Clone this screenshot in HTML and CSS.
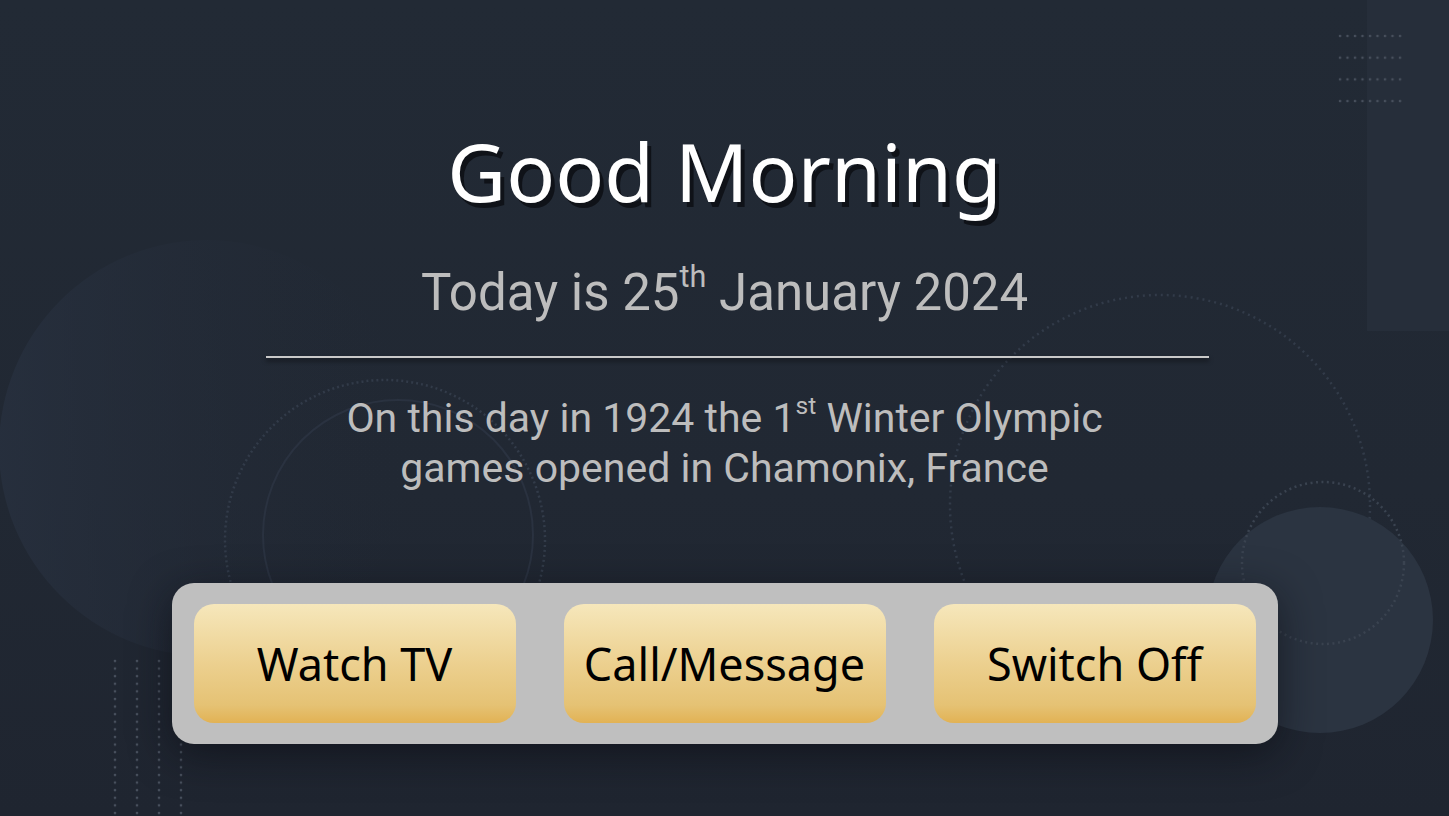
FILE: index.html
```html
<!DOCTYPE html>
<html lang="en">
<head>
<meta charset="utf-8">
<title>Good Morning</title>
<link rel="stylesheet" href="styles.css">
</head>
<body>
<div class="screen">
  <svg class="decor" width="1449" height="816" viewBox="0 0 1449 816" aria-hidden="true">
    <defs>
      <linearGradient id="bigc" x1="0" y1="0" x2="1" y2="0">
        <stop offset="0" stop-color="#283140" stop-opacity="0.75"/>
        <stop offset="1" stop-color="#222935" stop-opacity="0"/>
      </linearGradient>
      <pattern id="dotrow" x="1338" y="34" width="7.5" height="21.7" patternUnits="userSpaceOnUse">
        <circle cx="2" cy="2" r="1.3" fill="#48505d"/>
      </pattern>
      <pattern id="dotcol" x="113" y="659" width="22" height="7.6" patternUnits="userSpaceOnUse">
        <circle cx="2" cy="2" r="1.3" fill="#48505d"/>
      </pattern>
    </defs>
    <circle cx="207" cy="448" r="208" fill="url(#bigc)"/>
    <circle cx="398" cy="535" r="135" fill="none" stroke="#2a3240" stroke-width="2"/>
    <circle cx="385" cy="540" r="160" fill="none" stroke="#323b49" stroke-width="2.5" stroke-dasharray="2 3"/>
    <rect x="1367" y="0" width="82" height="331" fill="#262e3a"/>
    <circle cx="1160" cy="505" r="210" fill="none" stroke="#323b49" stroke-width="2.5" stroke-dasharray="2 4"/>
    <circle cx="1320" cy="620" r="113" fill="#2b3441"/>
    <circle cx="1323" cy="563" r="81" fill="none" stroke="#3a4350" stroke-width="2.5" stroke-dasharray="2 3.5"/>
    <rect x="1337" y="33" width="68" height="72" fill="url(#dotrow)"/>
    <rect x="112" y="658" width="74" height="160" fill="url(#dotcol)"/>
  </svg>

  <main class="content">
    <h1 class="greeting">Good Morning</h1>
    <p class="date">Today is 25<sup>th</sup> January 2024</p>
    <hr class="divider">
    <p class="fact">On this day in 1924 the 1<sup>st</sup> Winter Olympic<br>games opened in Chamonix, France</p>
    <nav class="actions">
      <button class="action">Watch TV</button>
      <button class="action">Call/Message</button>
      <button class="action">Switch Off</button>
    </nav>
  </main>
</div>
</body>
</html>
```
FILE: styles.css
```css
html, body {
  margin: 0;
  padding: 0;
}
body {
  background: #212833;
  font-family: "Noto Sans", "Open Sans", sans-serif;
}
.screen {
  position: relative;
  width: 1449px;
  height: 816px;
  overflow: hidden;
  background: linear-gradient(180deg, #222a35 0%, #212833 60%, #1f2530 100%);
}
.decor {
  position: absolute;
  left: 0;
  top: 0;
}
.content {
  position: relative;
  display: flex;
  flex-direction: column;
  align-items: center;
  padding-top: 119px;
}
.greeting {
  margin: 0;
  font-family: "Noto Sans", sans-serif;
  font-weight: 400;
  font-size: 81px;
  line-height: 104px;
  color: #ffffff;
  text-shadow: 4px 5px 0 #0f1218;
}
.date {
  margin: 40px 0 0;
  font-family: Roboto, sans-serif;
  font-size: 51px;
  line-height: 60px;
  color: #bdbdbd;
}
.date sup, .fact sup {
  font-size: 0.6em;
  line-height: 0;
  vertical-align: 0.75em;
}
.divider {
  width: 943px;
  margin: 33px 0 0 26px;
  border: 0;
  height: 2px;
  background: #c9c9c9;
  box-shadow: 0 3px 4px rgba(0,0,0,0.6);
}
.fact {
  margin: 35px 0 0;
  font-family: Roboto, sans-serif;
  font-size: 41px;
  line-height: 50px;
  color: #bdbdbd;
  text-align: center;
}
.actions {
  margin-top: 90px;
  display: flex;
  gap: 48px;
  padding: 21px 22px;
  background: #bfbfbf;
  border-radius: 22px;
  box-shadow: 0 10px 40px rgba(10,12,18,0.6);
}
.action {
  width: 322px;
  height: 119px;
  border: 0;
  border-radius: 20px;
  background: linear-gradient(180deg, #f6e7bb 0%, #ecd08f 50%, #e5c274 85%, #e2b254 100%);
  font-family: "Noto Sans", sans-serif;
  font-size: 45px;
  color: #000;
  padding: 0;
}
```
